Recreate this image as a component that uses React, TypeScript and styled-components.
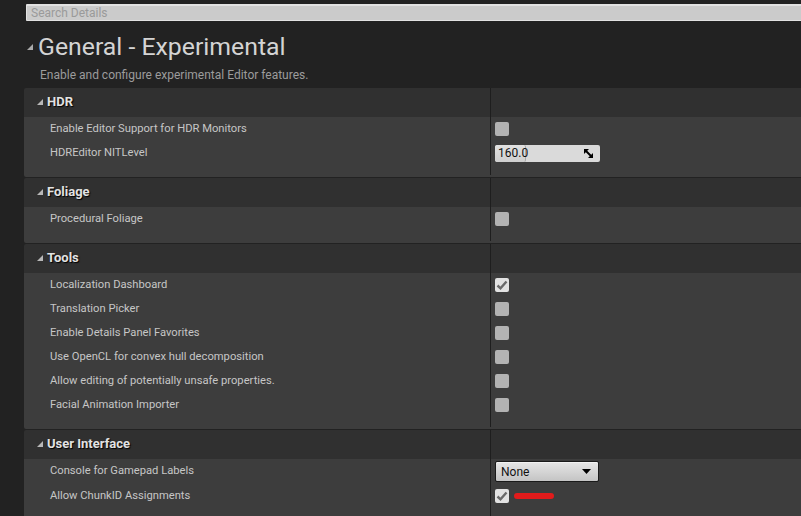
import React from "react";
import styled, { createGlobalStyle } from "styled-components";

const Global = createGlobalStyle`
  html, body { margin: 0; padding: 0; background: #222222; overflow: hidden; }
  body { font-family: Roboto, "Liberation Sans", sans-serif; }
`;

const Page = styled.div`
  width: 801px;
  height: 516px;
  padding-top: 4px;
  box-sizing: border-box;
  background: #222222;
  overflow: hidden;
`;

const SearchBox = styled.div`
  margin-left: 26px;
  margin-right: -6px;
  height: 17px;
  box-sizing: border-box;
  background: #cbcbcb;
  border: 1px solid #e2e2e2;
  border-top-width: 2px;
  border-radius: 1px;
  display: flex;
  align-items: center;
  padding-left: 4px;
  font-size: 12px;
  color: #9a9a9a;
`;

const TitleRow = styled.div`
  margin-top: 12px;
  margin-left: 27px;
  height: 28px;
  display: flex;
  align-items: center;
  gap: 5px;
`;

const Title = styled.h1`
  margin: 0;
  font-weight: 400;
  font-size: 24.8px;
  line-height: 28px;
  color: #d4d4d4;
`;

const Subtitle = styled.div`
  margin: 6px 0 5px 40px;
  font-size: 12px;
  line-height: 16px;
  color: #9c9c9c;
`;

const Panel = styled.div`
  margin-left: 24px;
  display: flex;
  flex-direction: column;
  gap: 1px;
`;

const Section = styled.section`
  border-radius: 2px 0 0 2px;
  overflow: hidden;
`;

const HeaderRow = styled.div`
  display: grid;
  grid-template-columns: 466px 1fr;
  height: 29px;
  background: #303030;
`;

const HeaderName = styled.div`
  display: flex;
  align-items: center;
  gap: 4px;
  padding-left: 13px;
  padding-bottom: 2px;
  font-size: 13px;
  font-weight: 700;
  color: #e2e2e2;
  text-shadow: 1px 1px 1px #000;
`;

const ValueCell = styled.div`
  border-left: 1px solid #1e1e1e;
  display: flex;
  align-items: center;
  padding-left: 4px;
`;

const Body = styled.div`
  background: #3d3d3d;
  padding-bottom: 2px;
`;

const Row = styled.div<{ $h?: number }>`
  display: grid;
  grid-template-columns: 466px 1fr;
  height: ${(p) => p.$h ?? 24}px;
`;

const Label = styled.div`
  display: flex;
  align-items: center;
  padding-left: 26px;
  padding-bottom: 2px;
  font-size: 11.2px;
  color: #c6c6c6;
  white-space: nowrap;
`;

const Tail = styled.div`
  display: grid;
  grid-template-columns: 466px 1fr;
  height: 10px;
`;

const Box = styled.div<{ $on?: boolean }>`
  width: 14px;
  height: 14px;
  border-radius: 2px;
  background: ${(p) => (p.$on ? "#e2e2e2" : "#b3b3b3")};
  display: flex;
  align-items: center;
  justify-content: center;
`;

const NumberField = styled.div`
  width: 105px;
  height: 17px;
  box-sizing: border-box;
  border-radius: 2px;
  background: #dadada;
  display: flex;
  align-items: stretch;
  overflow: hidden;
`;

const NumberValue = styled.div`
  width: 31px;
  border-right: 1px solid #a8a8a8;
  border-radius: 2px;
  background: linear-gradient(#e2e2e2, #cfcfcf);
  font-size: 12px;
  line-height: 17px;
  padding-left: 3px;
  box-sizing: border-box;
  color: #111;
`;

const NumberRest = styled.div`
  flex: 1;
  display: flex;
  align-items: center;
  justify-content: flex-end;
  padding-right: 7px;
`;

const Combo = styled.div`
  width: 104px;
  height: 21px;
  box-sizing: border-box;
  border: 1px solid #1a1a1a;
  border-radius: 2px;
  background: linear-gradient(#e6e6e6, #c4c4c4);
  box-shadow: inset 0 1px 0 #f2f2f2;
  display: flex;
  align-items: center;
  justify-content: space-between;
  padding: 0 7px 0 5px;
  font-size: 12px;
  color: #111;
`;

const RedMark = styled.div`
  width: 40px;
  height: 6px;
  border-radius: 3px;
  background: #e11b1b;
  margin-left: 5px;
`;

const Tri = ({ size = 6, color = "#b8b8b8" }: { size?: number; color?: string }) => (
  <svg width={size} height={size} viewBox="0 0 6 6">
    <polygon points="6,0 6,6 0,6" fill={color} />
  </svg>
);

const Check = () => (
  <svg width="12" height="10" viewBox="0 0 12 10">
    <path d="M1.5 5.5 L4.5 8.3 L10.5 1.5" stroke="#6a6a6a" strokeWidth="2.4" fill="none" />
  </svg>
);

const ResizeIcon = () => (
  <svg width="9" height="9" viewBox="0 0 9 9">
    <polygon points="0,0 5,0 0,5" fill="#000" />
    <polygon points="9,9 9,4 4,9" fill="#000" />
    <path d="M1 1 L8 8" stroke="#000" strokeWidth="2" />
  </svg>
);

const Caret = () => (
  <svg width="9" height="5" viewBox="0 0 9 5">
    <polygon points="0,0 9,0 4.5,5" fill="#000" />
  </svg>
);

type Prop = { label: string; value: React.ReactNode; h?: number };

const CheckBox = ({ on }: { on?: boolean }) => <Box $on={on}>{on && <Check />}</Box>;

const Category = ({ title, props }: { title: string; props: Prop[] }) => (
  <Section>
    <HeaderRow>
      <HeaderName>
        <Tri />
        {title}
      </HeaderName>
      <ValueCell />
    </HeaderRow>
    <Body>
      {props.map((p) => (
        <Row key={p.label} $h={p.h}>
          <Label>{p.label}</Label>
          <ValueCell>{p.value}</ValueCell>
        </Row>
      ))}
      <Tail>
        <div />
        <ValueCell />
      </Tail>
    </Body>
  </Section>
);

export default function App() {
  return (
    <Page>
      <Global />
      <SearchBox>Search Details</SearchBox>
      <TitleRow>
        <Tri size={6} color="#aaaaaa" />
        <Title>General - Experimental</Title>
      </TitleRow>
      <Subtitle>Enable and configure experimental Editor features.</Subtitle>
      <Panel>
        <Category
          title="HDR"
          props={[
            { label: "Enable Editor Support for HDR Monitors", value: <CheckBox /> },
            {
              label: "HDREditor NITLevel",
              value: (
                <NumberField>
                  <NumberValue>160.0</NumberValue>
                  <NumberRest>
                    <ResizeIcon />
                  </NumberRest>
                </NumberField>
              ),
            },
          ]}
        />
        <Category title="Foliage" props={[{ label: "Procedural Foliage", value: <CheckBox /> }]} />
        <Category
          title="Tools"
          props={[
            { label: "Localization Dashboard", value: <CheckBox on /> },
            { label: "Translation Picker", value: <CheckBox /> },
            { label: "Enable Details Panel Favorites", value: <CheckBox /> },
            { label: "Use OpenCL for convex hull decomposition", value: <CheckBox /> },
            { label: "Allow editing of potentially unsafe properties.", value: <CheckBox /> },
            { label: "Facial Animation Importer", value: <CheckBox /> },
          ]}
        />
        <Category
          title="User Interface"
          props={[
            {
              label: "Console for Gamepad Labels",
              h: 25,
              value: (
                <Combo>
                  None
                  <Caret />
                </Combo>
              ),
            },
            {
              label: "Allow ChunkID Assignments",
              value: (
                <>
                  <CheckBox on />
                  <RedMark />
                </>
              ),
            },
          ]}
        />
      </Panel>
    </Page>
  );
}
